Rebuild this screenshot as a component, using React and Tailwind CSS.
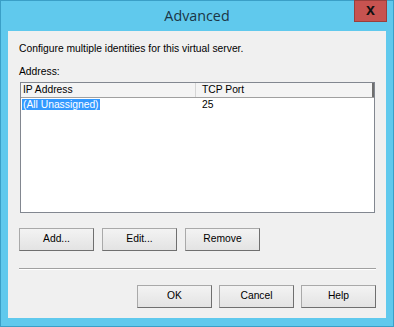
const ui = { fontFamily: '"Liberation Sans", Arial, sans-serif' };

function WinButton({ children }) {
  return (
    <button
      className="h-[23px] w-[75px] border border-t-[#a9a9a9] border-l-[#a9a9a9] border-r-[#6f6f6f] border-b-[#6f6f6f] bg-gradient-to-b from-[#f3f3f3] to-[#e3e3e3] text-[10.3px] leading-none text-black"
      style={ui}
    >
      {children}
    </button>
  );
}

function AddressList() {
  return (
    <div className="ml-px mr-[1px] flex h-[131px] flex-col border border-[#828790] bg-white">
      <div className="flex h-[15px] border-b border-[#a0a0a0] bg-[#f4f4f4] text-[10.3px] leading-[14px] text-black">
        <div className="w-[175px] border-r border-[#d5d5d5] pl-[2px]">IP Address</div>
        <div className="flex-1 border-r-2 border-[#6f6f6f] pl-[6px]">TCP Port</div>
      </div>
      <div className="flex h-[14px] text-[10.3px] leading-[14px]">
        <div className="w-[175px] pl-px">
          <span className="bg-[#3399ff] px-px text-white">(All Unassigned)</span>
        </div>
        <div className="flex-1 pl-[6px] text-black">25</div>
      </div>
    </div>
  );
}

export default function App() {
  return (
    <div
      className="flex h-[327px] w-[394px] flex-col border border-[#3a9fc7] bg-[#60c9ed]"
      style={ui}
    >
      <div className="relative h-[30px] shrink-0">
        <div
          className="pt-[5px] text-center text-[14.3px] leading-[20px] text-[#1b3645]"
          style={{ fontFamily: '"Open Sans", "Noto Sans", sans-serif' }}
        >
          Advanced
        </div>
        <div className="absolute right-[6px] top-[-1px] flex h-[22px] w-[33px] items-center justify-center border border-[#9a3f3c] bg-[#c75350] pb-[2px] text-[16px] font-bold leading-none text-[#111]">
          x
        </div>
      </div>
      <div className="mx-[7px] mb-[8px] flex flex-1 flex-col bg-[#f0f0f0] pl-[11px] pr-[10px] text-black">
        <div className="mt-[11px] text-[10.3px] leading-[13px]">
          Configure multiple identities for this virtual server.
        </div>
        <div className="mt-[10px] text-[10.3px] leading-[13px]">Address:</div>
        <div className="mt-[4px]">
          <AddressList />
        </div>
        <div className="mt-[15px] flex gap-[8px]">
          <WinButton>Add...</WinButton>
          <WinButton>Edit...</WinButton>
          <WinButton>Remove</WinButton>
        </div>
        <div className="mt-[17px] border-t border-b border-t-[#a0a0a0] border-b-white" />
        <div className="mt-[15px] flex justify-end gap-[7px]">
          <WinButton>OK</WinButton>
          <WinButton>Cancel</WinButton>
          <WinButton>Help</WinButton>
        </div>
      </div>
    </div>
  );
}
